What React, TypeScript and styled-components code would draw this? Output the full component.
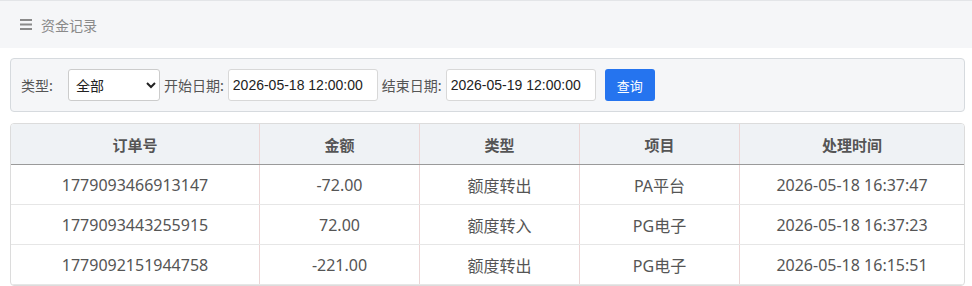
import styled, { createGlobalStyle } from 'styled-components';

const GlobalStyle = createGlobalStyle`
  body {
    margin: 0;
    background: #fff;
    font-family: "Noto Sans CJK SC", "Noto Sans", sans-serif;
  }
`;

const Header = styled.div`
  height: 48px;
  box-sizing: border-box;
  border-top: 1px solid #e3e5e8;
  background: #f5f6f8;
  display: flex;
  align-items: center;
  padding-left: 20px;
  gap: 9px;
  color: #8a8a8a;
  font-size: 14px;
`;

const Content = styled.div`
  padding: 10px 7px 0 10px;
`;

const FilterBar = styled.div`
  height: 54px;
  box-sizing: border-box;
  border: 1px solid #d6dade;
  border-radius: 4px;
  background: #f5f6f8;
  display: flex;
  align-items: center;
  padding: 0 10px;
`;

const Label = styled.span`
  font-size: 14px;
  color: #555;
  margin-right: 4px;
`;

const Select = styled.select`
  width: 92px;
  height: 32px;
  margin-left: 11px;
  margin-right: 4px;
  border: 1px solid #ccc;
  border-radius: 3px;
  background: #fff;
  font-size: 14px;
  color: #222;
  padding: 0 3px;
  font-family: "Noto Sans CJK SC", sans-serif;
`;

const DateInput = styled.input`
  width: 150px;
  height: 32px;
  box-sizing: border-box;
  border: 1px solid #d8d8d8;
  border-radius: 3px;
  background: #fff;
  font-size: 14px;
  color: #222;
  padding: 0 4px;
  margin-right: 4px;
  font-family: "Liberation Sans", Arial, sans-serif;
`;

const Button = styled.button`
  margin-left: 5px;
  width: 50px;
  height: 32px;
  border: none;
  border-radius: 3px;
  background: #2574ef;
  color: #fff;
  font-size: 13px;
  font-family: "Noto Sans CJK SC", sans-serif;
`;

const TableWrap = styled.div`
  margin-top: 11px;
  border: 1px solid #dcdcdc;
  border-radius: 4px;
  overflow: hidden;
`;

const Table = styled.table`
  width: 100%;
  border-collapse: collapse;
  table-layout: fixed;
`;

const Th = styled.th<{ $w?: number }>`
  width: ${(p) => (p.$w ? `${p.$w}px` : 'auto')};
  height: 40px;
  background: #eff2f5;
  border-bottom: 1px solid #9a9a9a;
  border-left: 1px solid #ecd6d6;
  color: #555;
  font-size: 15px;
  font-weight: bold;
  padding: 0;
  &:first-child {
    border-left: none;
  }
`;

const Td = styled.td`
  height: 39px;
  border-bottom: 1px solid #e6e6e6;
  border-left: 1px solid #ecd6d6;
  color: #555;
  font-family: "Noto Sans", "Noto Sans CJK SC", sans-serif;
  font-size: 16px;
  text-align: center;
  padding: 0;
  &:first-child {
    border-left: none;
  }
`;

const rows = [
  ['1779093466913147', '-72.00', '额度转出', 'PA平台', '2026-05-18 16:37:47'],
  ['1779093443255915', '72.00', '额度转入', 'PG电子', '2026-05-18 16:37:23'],
  ['1779092151944758', '-221.00', '额度转出', 'PG电子', '2026-05-18 16:15:51'],
];

function MenuIcon() {
  return (
    <svg width="12" height="11" viewBox="0 0 12 11">
      <rect x="0" y="0" width="12" height="2" fill="#8a8a8a" />
      <rect x="0" y="4.5" width="12" height="2" fill="#8a8a8a" />
      <rect x="0" y="9" width="12" height="2" fill="#8a8a8a" />
    </svg>
  );
}

export default function App() {
  return (
    <>
      <GlobalStyle />
      <Header>
        <MenuIcon />
        <span>资金记录</span>
      </Header>
      <Content>
        <FilterBar>
          <Label>类型:</Label>
          <Select defaultValue="all">
            <option value="all">全部</option>
          </Select>
          <Label>开始日期:</Label>
          <DateInput defaultValue="2026-05-18 12:00:00" />
          <Label>结束日期:</Label>
          <DateInput defaultValue="2026-05-19 12:00:00" />
          <Button>查询</Button>
        </FilterBar>
        <TableWrap>
          <Table>
            <thead>
              <tr>
                <Th $w={248}>订单号</Th>
                <Th $w={159}>金额</Th>
                <Th $w={159}>类型</Th>
                <Th $w={159}>项目</Th>
                <Th>处理时间</Th>
              </tr>
            </thead>
            <tbody>
              {rows.map((r) => (
                <tr key={r[0]}>
                  {r.map((c, i) => (
                    <Td key={i}>{c}</Td>
                  ))}
                </tr>
              ))}
            </tbody>
          </Table>
        </TableWrap>
      </Content>
    </>
  );
}
